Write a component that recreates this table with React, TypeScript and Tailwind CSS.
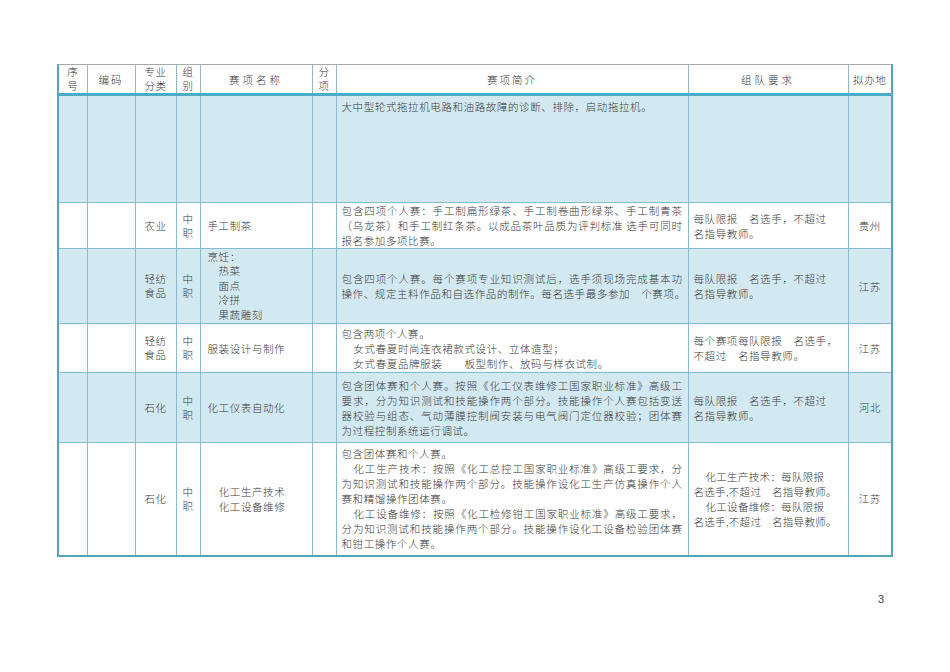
import React from "react";

type Cell = React.ReactNode;

const SHADE = "bg-[#d3e9f1]";

// one line of justified intro text
function J({ children, indent }: { children: React.ReactNode; indent?: boolean }) {
  return (
    <div className={`whitespace-nowrap [text-align-last:justify] text-justify ${indent ? "pl-[12px]" : ""}`}>
      {children}
    </div>
  );
}

function L({ children, indent }: { children: React.ReactNode; indent?: boolean }) {
  return <div className={`whitespace-nowrap ${indent ? "pl-[12px]" : ""}`}>{children}</div>;
}

function Stack({ a, b }: { a: string; b: string }) {
  return (
    <div className="leading-[14px]">
      <div>{a}</div>
      <div>{b}</div>
    </div>
  );
}

interface Row {
  h: string;
  shade: boolean;
  major: Cell;
  group: Cell;
  name: Cell;
  intro: Cell;
  team: Cell;
  place: Cell;
  introTop?: boolean;
}

const teamStd = (
  <>
    <L>每队限报　名选手，不超过</L>
    <L>名指导教师。</L>
  </>
);

const rows: Row[] = [
  {
    h: "h-[108px]",
    shade: true,
    major: null,
    group: null,
    name: null,
    intro: <L>大中型轮式拖拉机电路和油路故障的诊断、排除，启动拖拉机。</L>,
    team: null,
    place: null,
    introTop: true,
  },
  {
    h: "h-[46px]",
    shade: false,
    major: "农业",
    group: <Stack a="中" b="职" />,
    name: <div className="text-left pl-[2px]">手工制茶</div>,
    intro: (
      <>
        <J>包含四项个人赛：手工制扁形绿茶、手工制卷曲形绿茶、手工制青茶</J>
        <J>（乌龙茶）和手工制红条茶。以成品茶叶品质为评判标准 选手可同时</J>
        <L>报名参加多项比赛。</L>
      </>
    ),
    team: teamStd,
    place: "贵州",
  },
  {
    h: "h-[75px]",
    shade: true,
    major: <Stack a="轻纺" b="食品" />,
    group: <Stack a="中" b="职" />,
    name: (
      <div className="text-left pl-[2px] leading-[14.5px]">
        <div>烹饪：</div>
        <div className="pl-[11px]">热菜</div>
        <div className="pl-[11px]">面点</div>
        <div className="pl-[11px]">冷拼</div>
        <div className="pl-[11px]">果蔬雕刻</div>
      </div>
    ),
    intro: (
      <>
        <J>包含四项个人赛。每个赛项专业知识测试后，选手须现场完成基本功</J>
        <J>操作、规定主料作品和自选作品的制作。每名选手最多参加　个赛项。</J>
      </>
    ),
    team: teamStd,
    place: "江苏",
  },
  {
    h: "h-[49px]",
    shade: false,
    major: <Stack a="轻纺" b="食品" />,
    group: <Stack a="中" b="职" />,
    name: <div className="text-left pl-[2px]">服装设计与制作</div>,
    intro: (
      <>
        <L>包含两项个人赛。</L>
        <L indent>女式春夏时尚连衣裙款式设计、立体造型；</L>
        <L indent>女式春夏品牌服装　　板型制作、放码与样衣试制。</L>
      </>
    ),
    team: (
      <>
        <L>每个赛项每队限报　名选手，</L>
        <L>不超过　名指导教师。</L>
      </>
    ),
    place: "江苏",
  },
  {
    h: "h-[70px]",
    shade: true,
    major: "石化",
    group: <Stack a="中" b="职" />,
    name: <div className="text-left pl-[2px]">化工仪表自动化</div>,
    intro: (
      <>
        <J>包含团体赛和个人赛。按照《化工仪表维修工国家职业标准》高级工</J>
        <J>要求，分为知识测试和技能操作两个部分。技能操作个人赛包括变送</J>
        <J>器校验与组态、气动薄膜控制阀安装与电气阀门定位器校验；团体赛</J>
        <L>为过程控制系统运行调试。</L>
      </>
    ),
    team: teamStd,
    place: "河北",
  },
  {
    h: "h-[113px]",
    shade: false,
    major: "石化",
    group: <Stack a="中" b="职" />,
    name: (
      <div className="text-center leading-[15px] pr-[8px]">
        <div>化工生产技术</div>
        <div>化工设备维修</div>
      </div>
    ),
    intro: (
      <>
        <L>包含团体赛和个人赛。</L>
        <J indent>化工生产技术：按照《化工总控工国家职业标准》高级工要求，分</J>
        <J>为知识测试和技能操作两个部分。技能操作设化工生产仿真操作个人</J>
        <L>赛和精馏操作团体赛。</L>
        <J indent>化工设备维修：按照《化工检修钳工国家职业标准》高级工要求，</J>
        <J>分为知识测试和技能操作两个部分。技能操作设化工设备检验团体赛</J>
        <L>和钳工操作个人赛。</L>
      </>
    ),
    team: (
      <div className="tracking-[0.3px]">
        <L indent>化工生产技术：每队限报</L>
        <L>名选手,不超过　名指导教师。</L>
        <L indent>化工设备维修：每队限报</L>
        <L>名选手,不超过　名指导教师。</L>
      </div>
    ),
    place: "江苏",
  },
];

const td = "border border-[#86bccd] align-middle p-0";

export default function App() {
  return (
    <div
      className="w-[950px] min-h-[672px] bg-white text-[#383838]"
      style={{ fontFamily: '"Noto Sans CJK SC", sans-serif' }}
    >
      <div className="pt-[64px] pl-[57px]">
        <table className="table-fixed border-collapse w-[834px] text-[10.5px] leading-[15px] tracking-[0.6px] font-light">
          <colgroup>
            <col className="w-[29px]" />
            <col className="w-[48px]" />
            <col className="w-[41px]" />
            <col className="w-[24px]" />
            <col className="w-[112px]" />
            <col className="w-[24px]" />
            <col className="w-[352px]" />
            <col className="w-[160px]" />
            <col className="w-[44px]" />
          </colgroup>
          <thead>
            <tr className="h-[29px] text-center">
              {[
                <Stack a="序" b="号" />,
                <span className="tracking-[2px]">编码</span>,
                <Stack a="专业" b="分类" />,
                <Stack a="组" b="别" />,
                <span className="tracking-[3px]">赛项名称</span>,
                <Stack a="分" b="项" />,
                <span className="tracking-[2px]">赛项简介</span>,
                <span className="tracking-[3px]">组队要求</span>,
                <span>拟办地</span>,
              ].map((c, i) => (
                <th
                  key={i}
                  className={`font-light p-0 align-middle border-t border-t-[#a9a9a9] border-b-[3px] border-b-[#4bacc6] border-x border-x-[#8fb7c4] ${
                    i === 0 ? "border-l-2 border-l-[#55a6bd]" : ""
                  } ${i === 8 ? "border-r-2 border-r-[#55a6bd]" : ""}`}
                >
                  {c}
                </th>
              ))}
            </tr>
          </thead>
          <tbody>
            {rows.map((r, ri) => (
              <tr
                key={ri}
                className={`${r.h} ${r.shade ? SHADE : "bg-white"} ${
                  ri === rows.length - 1 ? "border-b-2 border-b-[#55a6bd]" : ""
                }`}
              >
                <td className={`${td} border-l-2 border-l-[#55a6bd]`} />
                <td className={td} />
                <td className={`${td} text-center`}>{r.major}</td>
                <td className={`${td} text-center`}>{r.group}</td>
                <td className={`${td} px-[5px]`}>{r.name}</td>
                <td className={td} />
                <td className={`${td} px-[5px] ${r.introTop ? "align-top pt-[3px]" : ""}`}>{r.intro}</td>
                <td className={`${td} px-[5px]`}>{r.team}</td>
                <td className={`${td} text-center border-r-2 border-r-[#55a6bd]`}>{r.place}</td>
              </tr>
            ))}
          </tbody>
        </table>
      </div>
      <div
        className="flex justify-end pr-[66px] pt-[34px] text-[11px] text-[#444]"
        style={{ fontFamily: '"Liberation Sans", sans-serif' }}
      >
        3
      </div>
    </div>
  );
}
